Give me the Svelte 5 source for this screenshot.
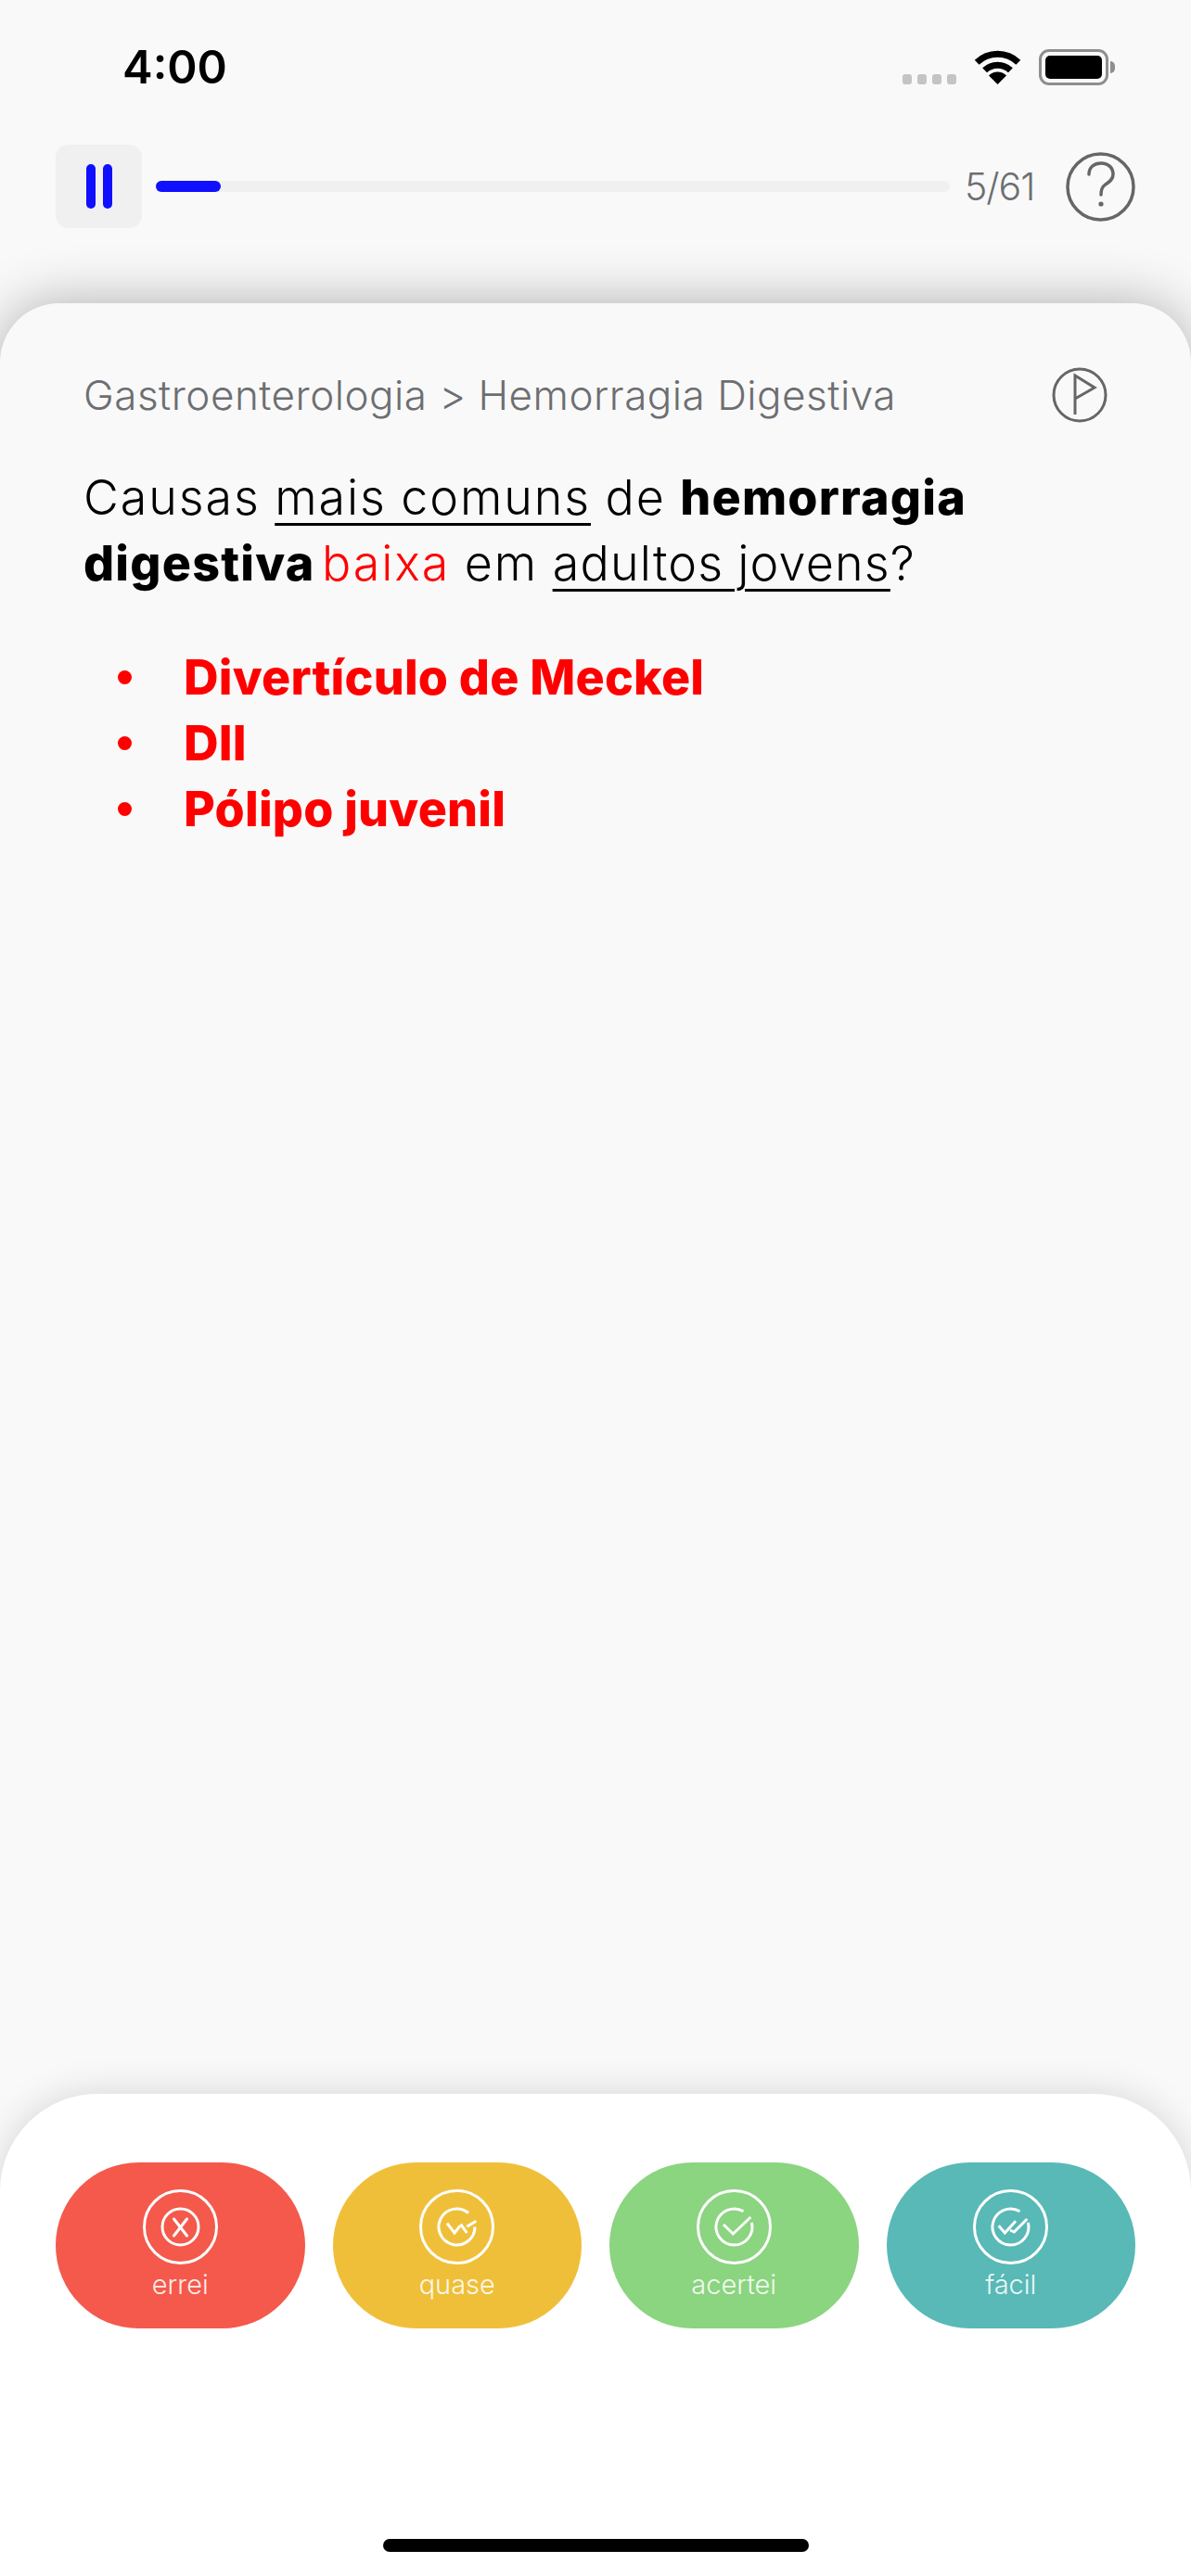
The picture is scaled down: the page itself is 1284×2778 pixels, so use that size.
<script lang="ts">
    const answers = ['Divertículo de Meckel', 'DII', 'Pólipo juvenil'];
    const rates = [
        { key: 'errei', label: 'errei' },
        { key: 'quase', label: 'quase' },
        { key: 'acertei', label: 'acertei' },
        { key: 'facil', label: 'fácil' }
    ];
</script>

<div class="screen">
    <header class="status">
        <span class="time">4:00</span>
        <div class="status-icons">
            <div class="signal"><i></i><i></i><i></i><i></i></div>
            <svg class="wifi" width="51" height="37" viewBox="0 0 51 37">
                <path d="M3.2 13.2a32 32 0 0 1 44.6 0" fill="none" stroke="#000" stroke-width="7" />
                <path d="M11.6 21.8a20 20 0 0 1 27.8 0" fill="none" stroke="#000" stroke-width="7" />
                <path d="M25.5 37l-9.5-9.6a13.5 13.5 0 0 1 19 0z" fill="#000" />
            </svg>
            <div class="battery"><div class="cell"></div></div>
        </div>
    </header>

    <div class="toolbar">
        <button class="pause" aria-label="pausar"><i></i><i></i></button>
        <div class="track"><div class="fill" style="width: {(5 / 61) * 100}%"></div></div>
        <span class="count">5/61</span>
        <svg class="help" width="75" height="75" viewBox="0 0 75 75" fill="none" stroke="#666" stroke-width="3.5">
            <circle cx="37.5" cy="37.5" r="35.5" />
            <path d="M25 24C25 16 31 12 38 12C46 12 51 17 51 24C51 31 45 33 41.500 36C39 38 38 40 38 46" stroke-linecap="round" />
            <circle cx="38" cy="56" r="2.600" fill="#666" stroke="none" />
        </svg>
    </div>

    <main class="card">
        <div class="crumbs">
            <span>Gastroenterologia &gt; Hemorragia Digestiva</span>
            <svg width="60" height="60" viewBox="0 0 60 60" fill="none" stroke="#666" stroke-width="3">
                <circle cx="30" cy="30" r="28" />
                <path d="M25 51V9L46 22L25 34" />
            </svg>
        </div>
        <h2 class="question">
            Causas <u>mais comuns</u> de <b>hemorragia digestiva</b> <span class="red">baixa</span> em <u class="tight">adultos jovens</u>?
        </h2>
        <ul class="answers">
            {#each answers as a}
                <li>{a}</li>
            {/each}
        </ul>
    </main>

    <footer class="panel">
        <div class="rates">
            {#each rates as r}
                <button class="rate {r.key}">
                    <svg width="81" height="81" viewBox="0 0 81 81" fill="none" stroke="#fff" stroke-width="3">
                        <circle cx="40.5" cy="40.5" r="39" />
                        {#if r.key === 'errei'}
                            <circle cx="40.5" cy="40.5" r="19.500" />
                            <path d="M33.500 32L47.500 50M47.500 32L33.500 50" stroke-linecap="round" />
                        {:else if r.key === 'quase'}
                            <path d="M53 25.500A19.500 19.500 0 1 0 60 40.500" />
                            <path d="M30 36.700L38 47L44 39.300M44.700 37.700L51.300 47M51.300 40.300L61.300 34.300" />
                        {:else if r.key === 'acertei'}
                            <path d="M50.500 23.800A19.500 19.500 0 1 0 59.400 35.800" />
                            <path d="M29 38L39.300 48L58.300 30" />
                        {:else}
                            <path d="M50.500 23.800A19.500 19.500 0 1 0 59.400 35.800" />
                            <path d="M27.700 39.300L34.300 47L46 34.300M40 44L44.300 46L58.300 32" />
                        {/if}
                    </svg>
                    <span>{r.label}</span>
                </button>
            {/each}
        </div>
        <div class="home"></div>
    </footer>
</div>

<style>
    :global(body) {
        margin: 0;
        background: #f9f9f9;
    }
    .screen {
        width: 1284px;
        height: 2778px;
        display: flex;
        flex-direction: column;
        overflow: hidden;
        background: #f9f9f9;
        font-family: Inter, "Open Sans", sans-serif;
    }

    .status {
        height: 156px;
        box-sizing: border-box;
        padding: 40px 89px 0 132px;
        display: flex;
        justify-content: space-between;
        align-items: flex-start;
    }
    .time {
        margin-top: 3px;
        font-size: 49px;
        font-weight: 600;
        line-height: 60px;
        color: #000;
    }
    .status-icons {
        display: flex;
        align-items: flex-end;
        padding-top: 13px;
    }
    .signal {
        display: flex;
        gap: 6px;
        margin: 0 19px 1px 0;
    }
    .signal i {
        width: 10px;
        height: 11px;
        border-radius: 3px;
        background: #c4c4c4;
    }
    .wifi { margin: 0 19px 1px 0; }
    .battery {
        position: relative;
        width: 75px;
        height: 39px;
        box-sizing: border-box;
        border: 3px solid #8e8e8e;
        border-radius: 11px;
        padding: 4px;
    }
    .battery::after {
        content: '';
        position: absolute;
        right: -10px;
        top: 10px;
        width: 5px;
        height: 13px;
        background: #8e8e8e;
        border-radius: 0 6px 6px 0;
    }
    .cell {
        height: 100%;
        background: #000;
        border-radius: 5px;
    }

    .toolbar {
        height: 90px;
        padding: 0 60px;
        display: flex;
        align-items: center;
    }
    .pause {
        width: 93px;
        height: 90px;
        flex: none;
        border: 0;
        border-radius: 14px;
        background: #f0f0f0;
        display: flex;
        justify-content: center;
        align-items: center;
        gap: 8px;
        padding: 0;
    }
    .pause i {
        width: 10px;
        height: 48px;
        border-radius: 5px;
        background: #1010ff;
    }
    .track {
        width: 856px;
        height: 12px;
        margin-left: 15px;
        border-radius: 6px;
        background: #f0f0f0;
    }
    .fill {
        height: 100%;
        border-radius: 6px;
        background: #1010ff;
    }
    .count {
        margin-left: 16px;
        width: 78px;
        font-size: 41px;
        font-weight: 300;
        letter-spacing: -1px;
        color: #6d6e71;
    }
    .help { margin-left: 31px; flex: none; }

    .card {
        flex: 1;
        margin: 81px 0 -120px;
        padding: 69px 90px 0;
        background: #f9f9f9;
        border-radius: 64px 64px 0 0;
        box-shadow: 0 0 60px rgba(0, 0, 0, 0.3);
    }
    .crumbs {
        display: flex;
        justify-content: space-between;
        align-items: center;
        font-size: 44px;
        font-weight: 300;
        letter-spacing: 0.5px;
        color: #6d6e71;
    }
    .question {
        margin: 45px 0 0;
        font-size: 52px;
        font-weight: 300;
        letter-spacing: 1.9px;
        word-spacing: -1px;
        line-height: 71px;
        color: #000;
    }
    .question u {
        text-decoration-thickness: 3px;
        text-underline-offset: 9px;
    }
    .question .tight { letter-spacing: 1.2px; }
    .question b {
        font-weight: 800;
        letter-spacing: 1.2px;
    }
    .red {
        margin-left: -8px;
        color: #f00;
    }
    .answers {
        margin: 52px 0 0;
        padding: 0 0 0 37px;
        list-style: none;
        font-size: 52px;
        font-weight: 800;
        letter-spacing: 0.2px;
        line-height: 71px;
        color: #f00;
    }
    .answers li {
        display: flex;
        align-items: center;
    }
    .answers li::before {
        content: '';
        width: 15px;
        height: 15px;
        margin-right: 56px;
        border-radius: 50%;
        background: #f00;
    }

    .panel {
        position: relative;
        height: 520px;
        flex: none;
        box-sizing: border-box;
        padding: 74px 60px 26px;
        display: flex;
        flex-direction: column;
        background: #fff;
        border-radius: 105px 105px 0 0;
        box-shadow: 0 0 40px rgba(0, 0, 0, 0.15);
    }
    .rates {
        display: grid;
        grid-template-columns: repeat(4, 1fr);
        gap: 30px;
    }
    .rate {
        height: 179px;
        border: 0;
        border-radius: 90px;
        padding: 29px 0 0;
        display: flex;
        flex-direction: column;
        align-items: center;
        color: rgba(255, 255, 255, 0.9);
        font-family: inherit;
        font-size: 29px;
        font-weight: 300;
        line-height: 36px;
    }
    .rate span { margin-top: 4px; }
    .errei { background: #f4594b; }
    .quase { background: #f0bf3a; }
    .acertei { background: #8bd480; }
    .facil { background: #58b9b7; }
    .home {
        width: 459px;
        height: 14px;
        margin: auto auto 0;
        border-radius: 7px;
        background: #000;
    }
</style>
